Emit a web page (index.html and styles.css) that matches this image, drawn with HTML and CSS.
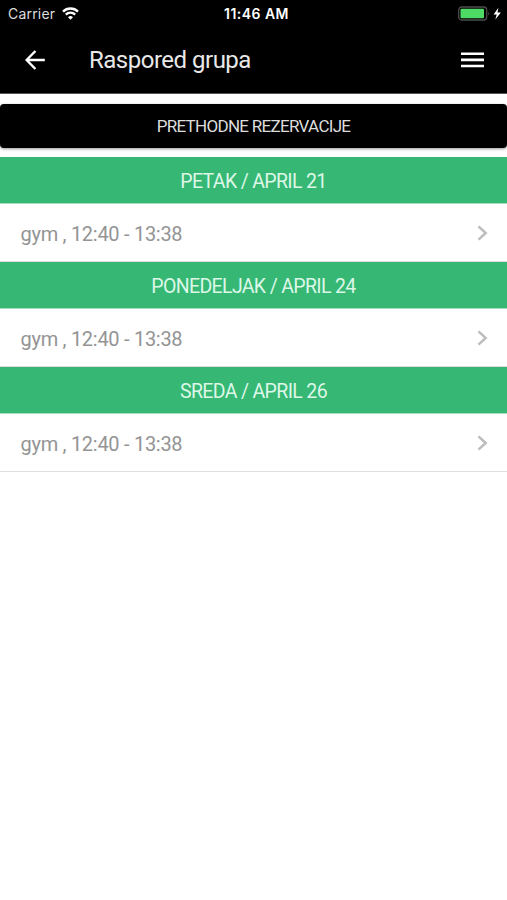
FILE: index.html
```html
<!DOCTYPE html>
<html lang="sr">

<head>
  <meta charset="utf-8">
  <meta name="viewport" content="width=device-width, initial-scale=1">
  <title>Raspored grupa</title>
  <link rel="stylesheet" href="styles.css">
</head>

<body>
  <header>
    <div class="status-bar">
      <div class="carrier">
        <span>Carrier</span>
        <svg width="17" height="13" viewBox="0 0 17 13" fill="none" stroke="#fff" stroke-width="2.3">
          <path d="M1 4.6a10.6 10.6 0 0 1 15 0" />
          <path d="M3.8 7.6a6.7 6.7 0 0 1 9.4 0" />
          <path d="M8.5 12.7L6 10.2a3.5 3.5 0 0 1 5 0z" fill="#fff" stroke="none" />
        </svg>
      </div>
      <div class="time">11:46 AM</div>
      <div class="battery">
        <svg width="44" height="16" viewBox="0 0 44 16">
          <rect x=".7" y="1" width="28" height="13" rx="3" fill="none" stroke="#4c4c4c" stroke-width="1.3" />
          <rect x="2.5" y="2.8" width="23.5" height="9.4" rx="1" fill="#4cd964" />
          <path d="M30.4 5.5q1.6 2 0 4z" fill="#555" />
          <path d="M40.4 1.8L35.6 8.6h3.1l-1.4 5 5.6-7.2h-3.4z" fill="#fff" />
        </svg>
      </div>
    </div>
    <div class="toolbar">
      <svg class="back" width="20" height="20" viewBox="0 0 20 20" fill="none" stroke="#fff" stroke-width="2.4">
        <path d="M19.8 10H2M10.4 1L1.6 10l8.8 9" />
      </svg>
      <h1>Raspored grupa</h1>
      <svg class="menu" width="23" height="16" viewBox="0 0 23 16" stroke="#fff" stroke-width="2.6">
        <path d="M0 1.7h23M0 7.9h23M0 14h23" />
      </svg>
    </div>
  </header>

  <button class="previous">PRETHODNE REZERVACIJE</button>

  <ul class="schedule">
    <li>
      <h2>PETAK / APRIL 21</h2>
      <div class="item">
        <span>gym , 12:40 - 13:38</span>
        <svg width="11" height="16" viewBox="0 0 11 16"><path d="M1.5 1.3L8.7 8l-7.2 6.7" /></svg>
      </div>
    </li>
    <li>
      <h2>PONEDELJAK / APRIL 24</h2>
      <div class="item">
        <span>gym , 12:40 - 13:38</span>
        <svg width="11" height="16" viewBox="0 0 11 16"><path d="M1.5 1.3L8.7 8l-7.2 6.7" /></svg>
      </div>
    </li>
    <li>
      <h2>SREDA / APRIL 26</h2>
      <div class="item">
        <span>gym , 12:40 - 13:38</span>
        <svg width="11" height="16" viewBox="0 0 11 16"><path d="M1.5 1.3L8.7 8l-7.2 6.7" /></svg>
      </div>
    </li>
  </ul>
</body>

</html>
```
FILE: styles.css
```css
* {
  padding: 0;
  margin: 0;
  box-sizing: border-box;
}

body {
  background-color: #fff;
  font-family: Roboto, "Noto Sans", sans-serif;
}

ul {
  list-style: none;
}

svg {
  display: block;
}

header {
  height: 94px;
  background-color: #000;
  border-bottom: 1px solid #555;
  color: #fff;
}

/* status bar */
.status-bar {
  height: 27px;
  display: grid;
  grid-template-columns: 1fr auto 1fr;
  align-items: center;
  padding: 0 5px 0 8px;
  font-family: Inter, sans-serif;
  font-size: 14px;
}

.carrier {
  display: flex;
  align-items: center;
  gap: 7px;
  color: #ddd;
  letter-spacing: .2px;
}

.time {
  padding-left: 3px;
  font-weight: 600;
  letter-spacing: .45px;
}

.battery {
  display: flex;
  justify-content: flex-end;
}

/* toolbar */
.toolbar {
  height: 66px;
  display: flex;
  align-items: center;
  padding: 0 23px 0 25px;
}

h1 {
  margin-left: 44px;
  flex: 1;
  font-size: 24px;
  font-weight: 400;
  letter-spacing: -.5px;
  color: #e8e8e8;
}

.previous {
  width: 100%;
  height: 44px;
  display: block;
  margin: 10px 0 9px;
  border: 0;
  border-radius: 4px;
  background-color: #000;
  box-shadow: 0 1px 3px rgba(0, 0, 0, .4);
  color: #ddd;
  font-family: inherit;
  font-size: 17px;
  font-weight: 400;
  letter-spacing: -.7px;
}

/* schedule */
.schedule li {
  height: 105px;
}

.schedule h2 {
  height: 47px;
  line-height: 49px;
  border-bottom: 1px solid #a5dfbf;
  background-color: #36b874;
  color: #dcf7e7;
  text-align: center;
  font-size: 19.5px;
  font-weight: 400;
  letter-spacing: -.65px;
}

.item {
  height: 58px;
  display: flex;
  align-items: center;
  justify-content: space-between;
  padding: 0 19px 0 20.5px;
  border-bottom: 1px solid #dedede;
  color: #949494;
  font-size: 20px;
  font-weight: 400;
  letter-spacing: -.28px;
}

.item span {
  padding-top: 2px;
}

.item path {
  fill: none;
  stroke: #bdbdbd;
  stroke-width: 2.5;
}
```
